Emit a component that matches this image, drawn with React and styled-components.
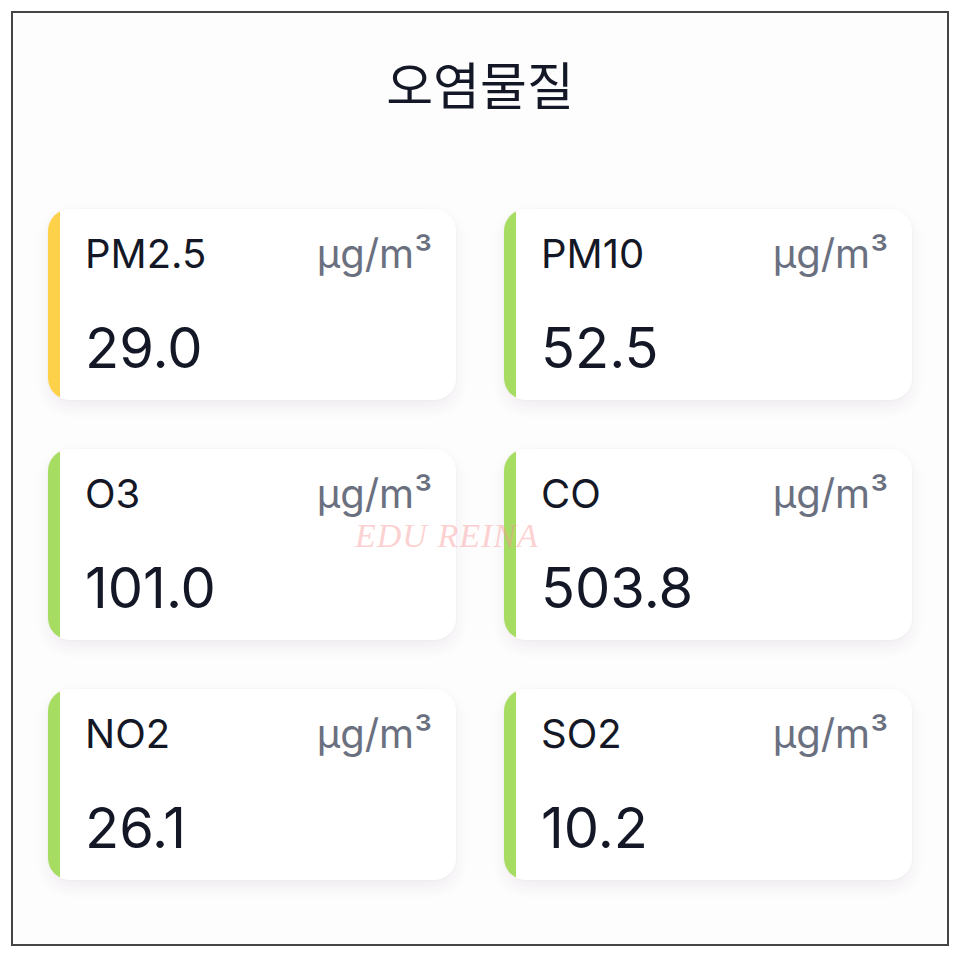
import styled, { createGlobalStyle } from "styled-components";

const GlobalStyle = createGlobalStyle`
  html, body {
    margin: 0;
    padding: 0;
    background: #ffffff;
  }
  body {
    font-family: Inter, "Noto Sans CJK KR", sans-serif;
  }
`;

const pollutants = [
  { name: "PM2.5", value: "29.0", level: "moderate" },
  { name: "PM10", value: "52.5", level: "good" },
  { name: "O3", value: "101.0", level: "good" },
  { name: "CO", value: "503.8", level: "good" },
  { name: "NO2", value: "26.1", level: "good" },
  { name: "SO2", value: "10.2", level: "good" },
];

const levelColors = {
  good: "#a6dc62",
  moderate: "#fdd24a",
};

const App = () => {
  return (
    <>
      <GlobalStyle />
      <Frame>
        <Title>오염물질</Title>
        <CardGrid>
          {pollutants.map((item) => (
            <Card key={item.name} level={item.level}>
              <CardHeader>
                <Label>{item.name}</Label>
                <Unit>µg/m³</Unit>
              </CardHeader>
              <Value>{item.value}</Value>
            </Card>
          ))}
        </CardGrid>
        <Watermark>EDU REINA</Watermark>
      </Frame>
    </>
  );
};

export default App;

const Frame = styled.div`
  position: relative;
  box-sizing: border-box;
  margin: 11px 0 0 11px;
  width: 938px;
  height: 935px;
  border: 2px solid #454545;
  background: #fefdfe;
  padding: 0 35px;
`;

const Title = styled.h1`
  margin: 0;
  padding-top: 45px;
  height: 196px;
  box-sizing: border-box;
  text-align: center;
  font-family: "Noto Sans CJK KR", sans-serif;
  font-weight: 400;
  font-size: 51px;
  line-height: 1;
  color: #141826;
`;

const CardGrid = styled.div`
  display: grid;
  grid-template-columns: 1fr 1fr;
  column-gap: 48px;
  row-gap: 49px;
`;

const Card = styled.div`
  box-sizing: border-box;
  height: 191px;
  background: linear-gradient(
    to right,
    ${(props) => levelColors[props.level]} 12px,
    #ffffff 12px
  );
  border-radius: 22px;
  box-shadow: 0 7px 16px rgba(40, 20, 40, 0.07), 0 0 3px rgba(40, 20, 40, 0.04);
  padding: 23px 24px 0 37px;
  display: flex;
  flex-direction: column;
`;

const CardHeader = styled.div`
  display: flex;
  justify-content: space-between;
  align-items: baseline;
`;

const Label = styled.span`
  font-size: 40px;
  line-height: 44px;
  color: #141826;
`;

const Unit = styled.span`
  font-size: 40px;
  line-height: 44px;
  color: #6b7080;
`;

const Value = styled.div`
  margin-top: 40px;
  font-size: 56px;
  line-height: 64px;
  color: #141826;
`;

const Watermark = styled.div`
  position: absolute;
  left: 342px;
  top: 504px;
  font-family: "Liberation Serif", serif;
  font-style: italic;
  font-size: 34px;
  letter-spacing: 1px;
  color: rgba(250, 150, 150, 0.45);
  pointer-events: none;
`;
